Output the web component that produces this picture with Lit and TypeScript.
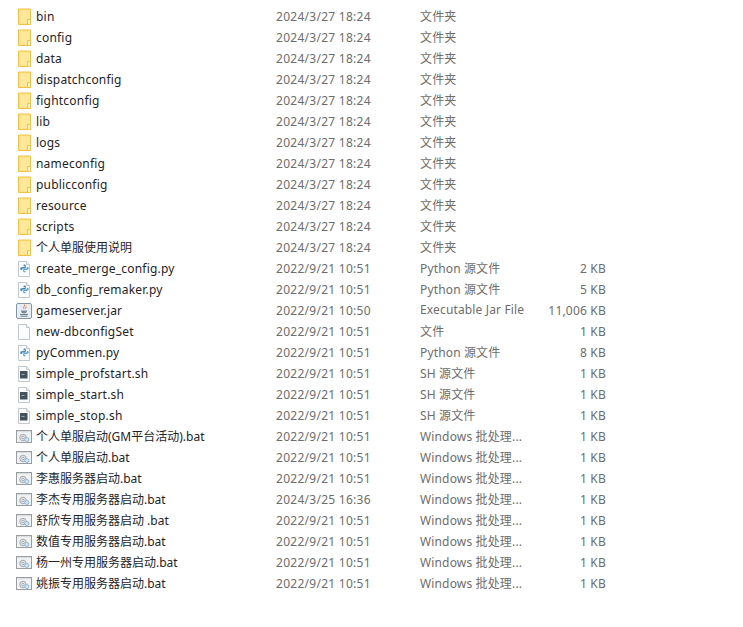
import { LitElement, html, css, svg } from "lit";
import { customElement } from "lit/decorators.js";

type Kind = "folder" | "py" | "jar" | "blank" | "sh" | "bat";
type Row = [Kind, string, string, string, string];

const D1 = "2024/3/27 18:24";
const D2 = "2022/9/21 10:51";
const FOLDER = "文件夹";
const BAT = "Windows 批处理...";
const PY = "Python 源文件";
const SH = "SH 源文件";

const folders = ["bin", "config", "data", "dispatchconfig", "fightconfig", "lib", "logs", "nameconfig", "publicconfig", "resource", "scripts", "个人单服使用说明"];

const rows: Row[] = [
  ...folders.map((n): Row => ["folder", n, D1, FOLDER, ""]),
  ["py", "create_merge_config.py", D2, PY, "2 KB"],
  ["py", "db_config_remaker.py", D2, PY, "5 KB"],
  ["jar", "gameserver.jar", "2022/9/21 10:50", "Executable Jar File", "11,006 KB"],
  ["blank", "new-dbconfigSet", D2, "文件", "1 KB"],
  ["py", "pyCommen.py", D2, PY, "8 KB"],
  ["sh", "simple_profstart.sh", D2, SH, "1 KB"],
  ["sh", "simple_start.sh", D2, SH, "1 KB"],
  ["sh", "simple_stop.sh", D2, SH, "1 KB"],
  ["bat", "个人单服启动(GM平台活动).bat", D2, BAT, "1 KB"],
  ["bat", "个人单服启动.bat", D2, BAT, "1 KB"],
  ["bat", "李惠服务器启动.bat", D2, BAT, "1 KB"],
  ["bat", "李杰专用服务器启动.bat", "2024/3/25 16:36", BAT, "1 KB"],
  ["bat", "舒欣专用服务器启动 .bat", D2, BAT, "1 KB"],
  ["bat", "数值专用服务器启动.bat", D2, BAT, "1 KB"],
  ["bat", "杨一州专用服务器启动.bat", D2, BAT, "1 KB"],
  ["bat", "姚振专用服务器启动.bat", D2, BAT, "1 KB"],
];

const page = svg`<path d="M2.500 1.500h8l3 3v12h-11z" fill="#fbfcfd" stroke="#c3c8cd"/><path d="M10.500 1.500v3h3" fill="#eef1f4" stroke="#c3c8cd"/>`;

const icons: Record<Kind, unknown> = {
  folder: svg`<path d="M2.500 1h12v15.500h-12z" fill="#fde289" stroke="#efc246"/><path d="M4 2.500h10v12.500h-10z" fill="#ffe89b"/><path d="M11.500 11.500h3v5h-3z" fill="#fff3c0" stroke="#efc246"/>`,
  py: svg`${page}<path d="M5.800 9V7.800c0-.6.400-.9 1-.9h2.100V6.300H7.500V5.400c0-.5.500-.8 1.100-.8s1.200.3 1.200.8v2.200c0 .5-.4.800-.9.800H6.800c-.5 0-.7.300-.7.800V10H5.300C4.700 10 4.300 9.600 4.300 8.700S4.700 7.300 5.300 7.300H5.800z" fill="#3f86bb"/><path d="M11.200 8V9.200c0 .6-.4.900-1 .9H8.100v.6h1.400v.9c0 .5-.5.800-1.100.8s-1.200-.3-1.200-.8V9.400c0-.5.400-.8.900-.8h2.100c.5 0 .7-.3.700-.8V7h.8c.6 0 1 .4 1 1.300s-.4 1.400-1 1.400h-.5z" fill="#5fa6d6"/>`,
  jar: svg`<rect x=".5" y="1.500" width="15" height="15" rx="1.500" fill="#e6edf4" stroke="#8695a6"/><path d="M4 12.500h8M4.500 14.200h7" stroke="#6f7f90" fill="none"/><path d="M5 8.500c0 2 .8 3 3 3s3-1 3-3z" fill="#7f8b97"/><path d="M8.500 2.500c1 1.500-1.500 2.500-1 4M10 4.500c.5 1-1 1.500-.8 2.500" stroke="#e0762a" fill="none"/>`,
  blank: page,
  sh: svg`${page}<rect x="4" y="6" width="7.500" height="7.500" fill="#44525e"/><path d="M5.500 9.500h3" stroke="#93a5b3" fill="none"/>`,
  bat: svg`<rect x=".5" y="2.500" width="15" height="12" fill="#f1f2f3" stroke="#9a9da0"/><path d="M1 3h14v1.200h-14z" fill="#dcdee0"/><circle cx="7" cy="9.500" r="3.300" fill="#dfe1e3" stroke="#a8abae"/><circle cx="7" cy="9.500" r="1.200" fill="#fff" stroke="#a8abae"/><circle cx="10.800" cy="11.500" r="2" fill="#d6e8f6" stroke="#86b8df"/>`,
};

@customElement("app-root")
export class AppRoot extends LitElement {
  static styles = css`
    :host {
      display: block;
      width: 743px;
      height: 627px;
      background: #fff;
      overflow: hidden;
      font-family: "Noto Sans", "Noto Sans CJK SC", sans-serif;
      font-size: 12px;
    }
    .list {
      display: flex;
      flex-direction: column;
      padding: 6px 0 0 16px;
    }
    .row {
      display: grid;
      grid-template-columns: 20px 240px 144px 110px 76px;
      height: 21px;
      align-items: center;
      white-space: nowrap;
    }
    .icon {
      display: block;
      width: 16px;
      height: 18px;
    }
    .name {
      color: #1f2328;
    }
    .name.latin {
      letter-spacing: 0.2px;
    }
    .name.cjk {
      padding-bottom: 2px;
    }
    .date,
    .type,
    .size {
      color: #6d6d6d;
    }
    .date {
      letter-spacing: 0.27px;
    }
    .type {
      letter-spacing: 0.15px;
      padding-bottom: 2px;
    }
    .size {
      text-align: right;
      letter-spacing: 0.2px;
    }
  `;

  render() {
    return html`<div class="list">
      ${rows.map(
        ([k, n, d, t, s]) => html`<div class="row">
          <svg class="icon" viewBox="0 0 16 18">${icons[k]}</svg>
          <span class="name ${/^[\x00-\x7f]+$/.test(n) ? "latin" : "cjk"}">${n}</span>
          <span class="date">${d}</span>
          <span class="type">${t}</span>
          <span class="size">${s}</span>
        </div>`
      )}
    </div>`;
  }
}
